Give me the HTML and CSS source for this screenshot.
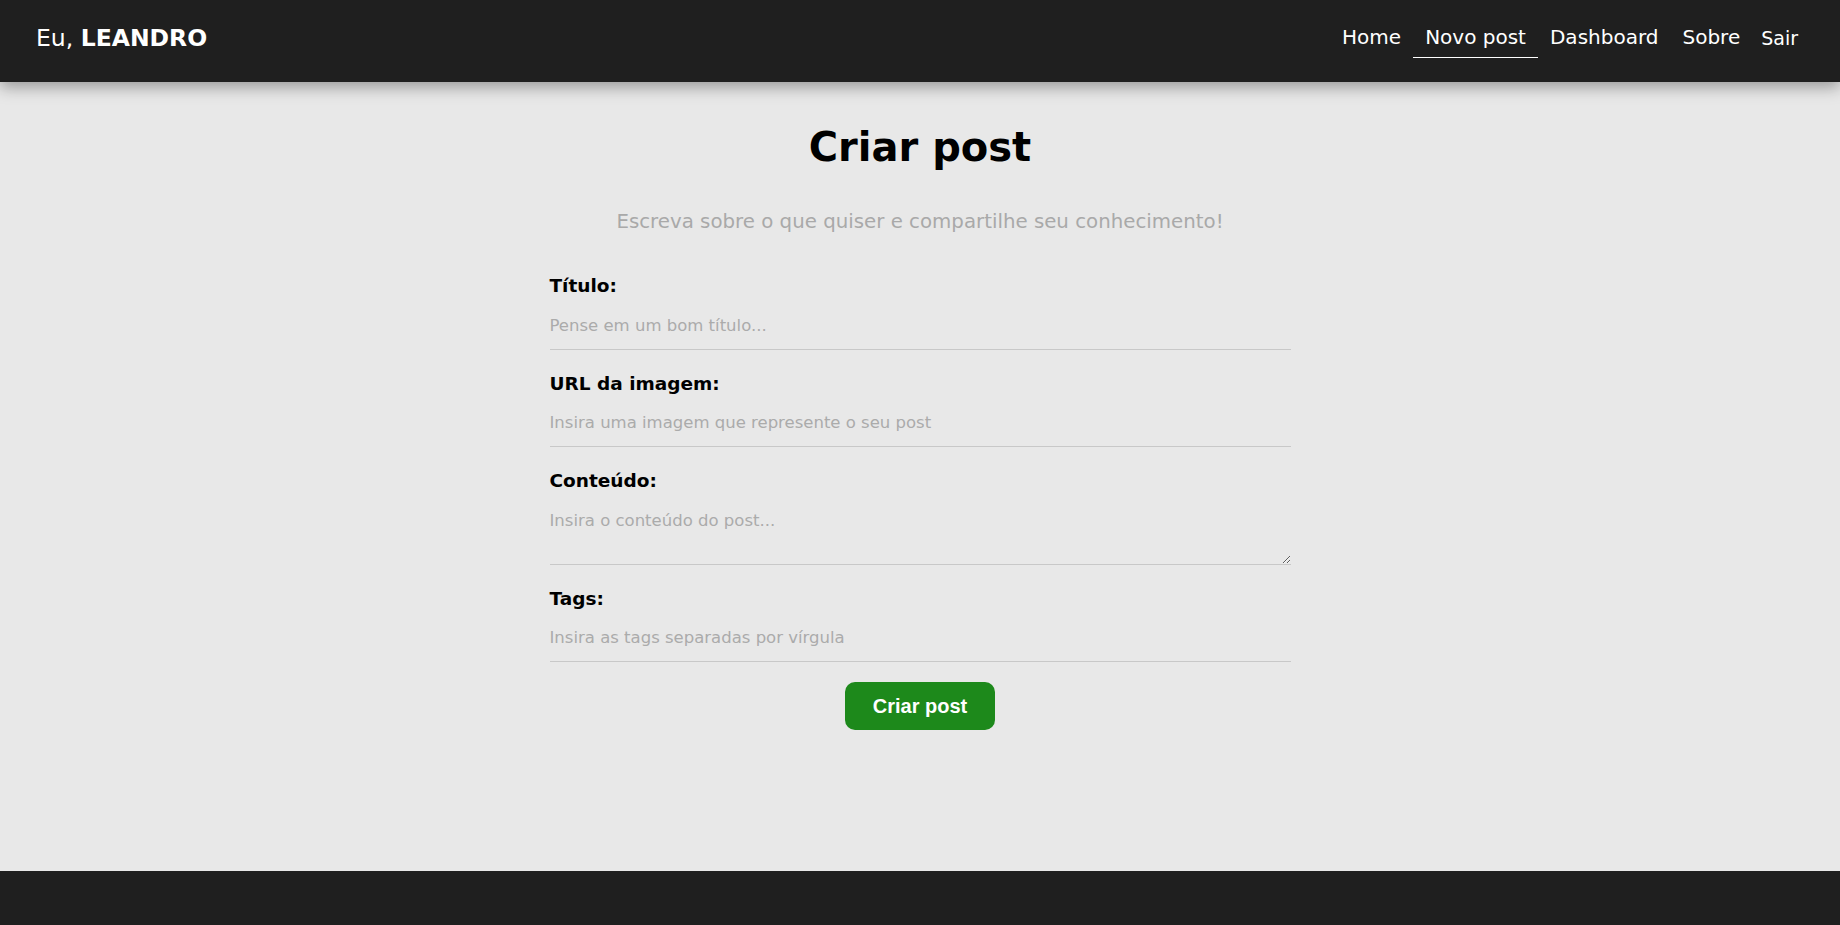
FILE: index.html
```html
<!DOCTYPE html>
<html lang="pt-BR">
<head>
<meta charset="utf-8">
<title>Criar post</title>
<link rel="stylesheet" href="styles.css">
</head>
<body>
<nav class="navbar">
  <a class="brand" href="#">Eu, <span class="brand-name">LEANDRO</span></a>
  <ul class="links">
    <li><a class="link" href="#">Home</a></li>
    <li><a class="link active" href="#">Novo post</a></li>
    <li><a class="link" href="#">Dashboard</a></li>
    <li><a class="link" href="#">Sobre</a></li>
    <li><button class="logout" type="button">Sair</button></li>
  </ul>
</nav>
<main class="main">
  <section class="create-post">
    <h1 class="title">Criar post</h1>
    <p class="lead">Escreva sobre o que quiser e compartilhe seu conhecimento!</p>
    <form class="post-form">
      <label class="field">
        <span class="field-label">Título:</span>
        <input class="field-input" type="text" name="title" placeholder="Pense em um bom título...">
      </label>
      <label class="field">
        <span class="field-label">URL da imagem:</span>
        <input class="field-input" type="text" name="image" placeholder="Insira uma imagem que represente o seu post">
      </label>
      <label class="field">
        <span class="field-label">Conteúdo:</span>
        <textarea class="field-input field-area" name="body" placeholder="Insira o conteúdo do post..."></textarea>
      </label>
      <label class="field">
        <span class="field-label">Tags:</span>
        <input class="field-input" type="text" name="tags" placeholder="Insira as tags separadas por vírgula">
      </label>
      <button class="btn" type="submit">Criar post</button>
    </form>
  </section>
</main>
<footer class="footer">
  <h3 class="footer-title">Escreva sobre o que você tem interesse!</h3>
  <p class="footer-copy">Mini Blog &copy; 2022</p>
</footer>
</body>
</html>
```

FILE: styles.css
```css
* {
  box-sizing: border-box;
}

body {
  margin: 0;
  background: #e8e8e8;
  font-family: "DejaVu Sans", "Liberation Sans", sans-serif;
  color: #000;
}

.navbar {
  position: relative;
  z-index: 1;
  height: 82px;
  display: flex;
  justify-content: space-between;
  align-items: center;
  padding: 0 35px 0 36px;
  background: #1f1f1f;
  box-shadow: 0 5px 15px rgba(0, 0, 0, 0.35);
}

.brand {
  color: #fff;
  text-decoration: none;
  font-size: 23.5px;
  padding-bottom: 6px;
}

.brand-name {
  font-weight: bold;
}

.links {
  display: flex;
  align-items: center;
  list-style: none;
  margin: 0 0 5px;
  padding: 0;
}

.link {
  display: block;
  color: #fff;
  text-decoration: none;
  font-size: 20px;
  line-height: normal;
  padding: 5px 12px 8px;
  border-bottom: 1px solid transparent;
}

.link.active {
  border-bottom-color: #fff;
}

.logout {
  display: block;
  background: none;
  border: none;
  color: #fff;
  font-family: inherit;
  font-size: 19px;
  line-height: normal;
  padding: 6px 7px 7px 9px;
  cursor: pointer;
}

.main {
  min-height: 789px;
  padding-top: 42px;
}

.create-post {
  width: 741px;
  margin: 0 auto;
  text-align: center;
}

.title {
  margin: 0;
  font-size: 40px;
  line-height: 46px;
  font-weight: bold;
}

.lead {
  margin: 40px 0 0;
  font-size: 19.8px;
  line-height: 23px;
  color: #a9a9a9;
}

.post-form {
  margin-top: 42px;
  display: flex;
  flex-direction: column;
  text-align: left;
}

.field {
  display: flex;
  flex-direction: column;
  margin-bottom: 23px;
}

.field:last-of-type {
  margin-bottom: 20px;
}

.field-label {
  font-size: 18.5px;
  line-height: 21px;
  font-weight: bold;
  margin-bottom: 9.5px;
}

.field-input {
  display: block;
  width: 100%;
  font-family: inherit;
  font-size: 16.5px;
  line-height: 20px;
  color: #000;
  background: transparent;
  border: none;
  border-bottom: 1px solid #c8c8c8;
  padding: 10px 0 13px;
  margin: 0;
  outline: none;
}

.field-input::placeholder {
  color: #ababab;
}

.field-area {
  height: 64px;
}

.btn {
  align-self: center;
  background: #1d891b;
  color: #fff;
  border: none;
  border-radius: 10px;
  font-family: "Liberation Sans", Arial, sans-serif;
  font-weight: bold;
  font-size: 20px;
  line-height: 24px;
  padding: 12px 28px;
  cursor: pointer;
}

.footer {
  background: #1f1f1f;
  color: #fff;
  text-align: center;
  padding: 58px 0 40px;
}

.footer-title {
  margin: 0 0 12px;
  font-size: 18px;
}

.footer-copy {
  margin: 0;
  font-size: 14px;
}
```
